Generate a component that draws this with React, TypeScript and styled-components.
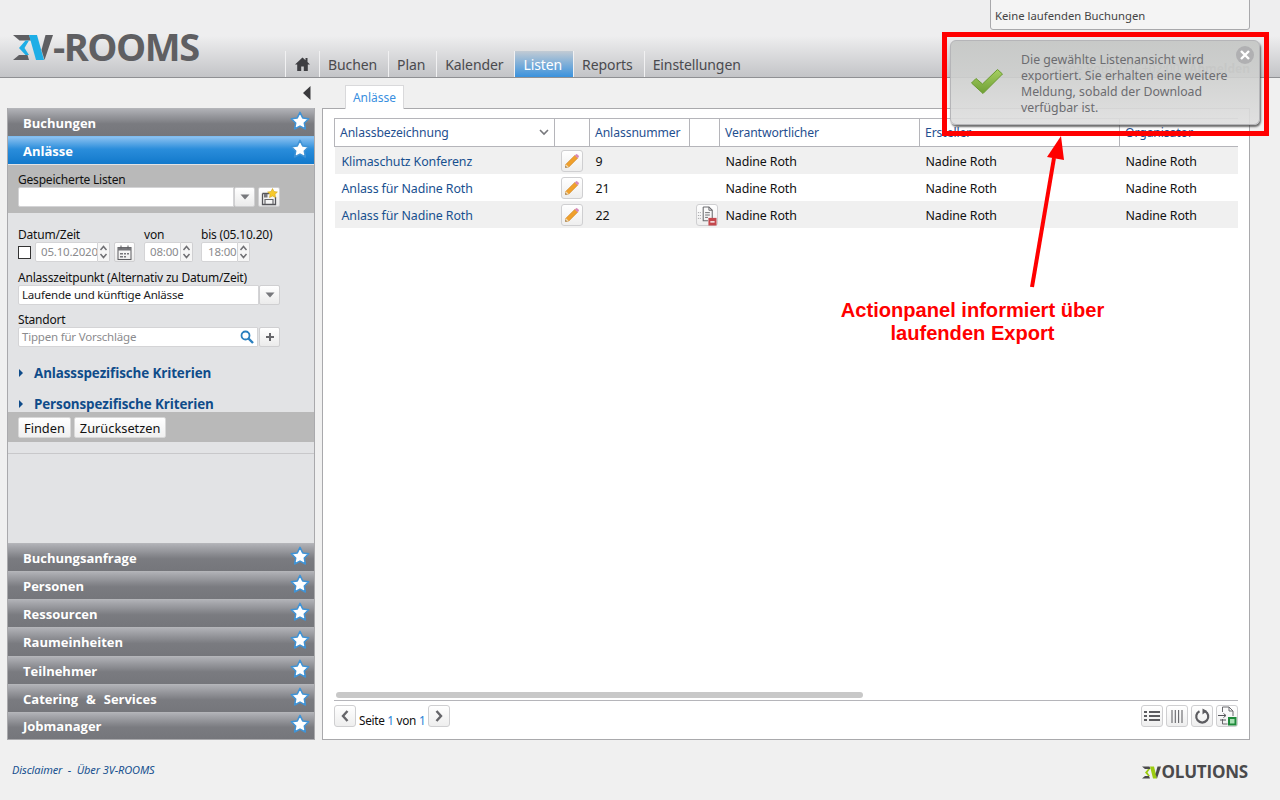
import React from 'react';
import styled, { createGlobalStyle } from 'styled-components';

const GlobalStyle = createGlobalStyle`
  html, body {
    margin: 0;
    padding: 0;
    background: #f0f0f0;
  }
  body {
    font-family: 'Noto Sans', 'Open Sans', sans-serif;
    font-size: 12px;
    color: #111;
  }
`;

const Page = styled.div`
  position: relative;
  width: 1280px;
  height: 800px;
  overflow: hidden;
  display: flex;
  flex-direction: column;
`;

/* header */

const Header = styled.header`
  height: 77px;
  flex: none;
  display: flex;
  align-items: flex-end;
  border-bottom: 1px solid #8f9093;
  background: linear-gradient(#eeeeef 0, #eeeeef 36px, #c3c4c7 77px);
`;

const Logo = styled.div`
  width: 272px;
  height: 44px;
  margin-left: 13px;
  display: flex;
  align-items: flex-start;
`;

const LogoText = styled.span`
  font-family: 'Open Sans', sans-serif;
  font-weight: 700;
  font-size: 38px;
  line-height: 27px;
  letter-spacing: -1.5px;
  color: #5f5f62;
  height: 27px;
`;

const Nav = styled.nav`
  display: flex;
  height: 26px;
`;

const NavItem = styled.div<{ $active?: boolean }>`
  height: 26px;
  box-sizing: border-box;
  padding: 0 11px 0 8px;
  display: flex;
  align-items: center;
  font-size: 14px;
  letter-spacing: -0.1px;
  border-left: 1px solid #f1f1f2;
  color: ${(p) => (p.$active ? '#ffffff' : '#4a4a4e')};
  background: ${(p) => (p.$active ? 'linear-gradient(#c2cbd4, #3a92dd)' : 'transparent')};
`;

const HomeItem = styled(NavItem)`
  width: 34px;
  justify-content: center;
  padding: 0;
`;

const UserBar = styled.div`
  position: absolute;
  top: 60px;
  right: 30px;
  font-size: 12px;
  color: #8c8c8e;
  display: flex;
  gap: 6px;
`;

const UserLogout = styled.b`
  color: #8c8c8e;
`;

const BookingBox = styled.div`
  position: absolute;
  top: -6px;
  left: 990px;
  width: 260px;
  height: 36px;
  box-sizing: border-box;
  padding: 13px 0 0 4px;
  background: #f4f4f4;
  border: 1px solid #a8a8ab;
  border-radius: 0 0 3px 3px;
  font-size: 11.3px;
  color: #444;
`;

/* layout */

const Body = styled.div`
  flex: 1;
  display: flex;
  align-items: flex-start;
  padding-left: 7px;
`;

const SideColumn = styled.div`
  width: 308px;
  display: flex;
  flex-direction: column;
`;

const CollapseRow = styled.div`
  height: 30px;
  display: flex;
  justify-content: flex-end;
  align-items: flex-start;
  padding: 8px 4px 0 0;
  box-sizing: border-box;
`;

const Sidebar = styled.aside`
  height: 632px;
  box-sizing: border-box;
  border: 1px solid #a9a9ac;
  border-top: none;
  display: flex;
  flex-direction: column;
  background: #e2e3e5;
`;

const AccordionHead = styled.div<{ $active?: boolean; $h?: number }>`
  height: ${(p) => p.$h ?? 28}px;
  flex: none;
  box-sizing: border-box;
  padding: 0 4px 0 15px;
  display: flex;
  align-items: center;
  justify-content: space-between;
  font-family: 'Open Sans', sans-serif;
  font-size: 13px;
  font-weight: 700;
  word-spacing: 4.5px;
  color: #fff;
  border-top: 1px solid ${(p) => (p.$active ? '#7fbdf0' : '#b4b5b9')};
  background: ${(p) =>
    p.$active
      ? 'linear-gradient(#8cc2f1, #2a8ddb 45%, #1279cb)'
      : 'linear-gradient(#b0b1b6, #7a7b80 55%, #75767b)'};
`;

const StarIcon = styled.svg`
  margin-bottom: 4px;
`;

const GrayBand = styled.div`
  height: 49px;
  flex: none;
  box-sizing: border-box;
  padding: 6px 10px 0;
  background: #b9b9b9;
  border-top: 1px solid #e2e3e5;
`;

const FormArea = styled.div`
  height: 199px;
  flex: none;
  box-sizing: border-box;
  padding: 13px 10px 0;
  display: flex;
  flex-direction: column;
`;

const FieldLabel = styled.div<{ $mt?: number }>`
  font-size: 12px;
  line-height: 18px;
  height: 16px;
  margin-top: ${(p) => p.$mt ?? 0}px;
  letter-spacing: -0.2px;
  white-space: nowrap;
`;

const FieldRow = styled.div`
  display: flex;
  align-items: center;
  height: 20px;
`;

const TextBox = styled.div<{ $w: number; $muted?: boolean; $ml?: number; $pl?: number }>`
  width: ${(p) => p.$w}px;
  height: 20px;
  flex: none;
  margin-left: ${(p) => p.$ml ?? 0}px;
  box-sizing: border-box;
  background: #fff;
  border: 1px solid #d4d4d6;
  border-radius: 2px 0 0 2px;
  padding: 0 1px 0 ${(p) => p.$pl ?? 3}px;
  font-size: 11.5px;
  line-height: 18px;
  letter-spacing: -0.2px;
  white-space: nowrap;
  overflow: hidden;
  color: ${(p) => (p.$muted ? '#8b8b8e' : '#222')};
  display: flex;
  align-items: center;
  justify-content: space-between;
`;

const SmallBtn = styled.div<{ $w: number; $ml?: number }>`
  width: ${(p) => p.$w}px;
  height: 20px;
  flex: none;
  margin-left: ${(p) => p.$ml ?? 0}px;
  box-sizing: border-box;
  border: 1px solid #cfcfd1;
  border-radius: 2px;
  background: linear-gradient(#ffffff, #ebebeb);
  display: flex;
  align-items: center;
  justify-content: center;
`;

const Spin = styled.div`
  width: 12px;
  height: 20px;
  flex: none;
  box-sizing: border-box;
  border: 1px solid #cfcfd1;
  border-left: none;
  border-radius: 0 2px 2px 0;
  background: #f6f6f6;
`;

const CheckBox = styled.div`
  width: 13px;
  height: 13px;
  flex: none;
  margin-right: 4px;
  box-sizing: border-box;
  background: #fff;
  border: 1px solid #333;
`;

const LabelRow = styled.div`
  display: flex;
  height: 16px;
`;

const LabelCell = styled(FieldLabel)<{ $w: number }>`
  width: ${(p) => p.$w}px;
`;

const Criteria = styled.div<{ $mt: number }>`
  margin-top: ${(p) => p.$mt}px;
  display: flex;
  align-items: center;
  height: 16px;
  font-family: 'Open Sans', sans-serif;
  font-weight: 700;
  font-size: 13.4px;
  letter-spacing: -0.1px;
  color: #0f4c8a;
  white-space: nowrap;
`;

const CriteriaArrow = styled.span`
  width: 0;
  height: 0;
  margin: 0 11px 0 1px;
  border-left: 4px solid #0f4c8a;
  border-top: 4px solid transparent;
  border-bottom: 4px solid transparent;
`;

const SearchIcon = styled.svg`
  margin-right: 1px;
`;

const ActionBand = styled.div`
  height: 30px;
  flex: none;
  box-sizing: border-box;
  padding: 5px 10px 0;
  display: flex;
  gap: 3px;
  background: #b9b9b9;
`;

const PlainBtn = styled.div`
  height: 21px;
  box-sizing: border-box;
  padding: 0 5px;
  display: flex;
  align-items: center;
  font-size: 12.8px;
  background: linear-gradient(#ffffff, #f0f0f0);
  border: 1px solid #d8d8d8;
  border-radius: 2px;
`;

const Spacer = styled.div`
  flex: 1;
  display: flex;
  flex-direction: column;
  padding-top: 11px;
  box-sizing: border-box;
`;

const SpacerLine = styled.div`
  height: 1px;
  background: #c8c8ca;
`;

/* main panel */

const MainColumn = styled.main`
  width: 928px;
  margin-left: 7px;
  display: flex;
  flex-direction: column;
`;

const TabRow = styled.div`
  height: 30px;
  box-sizing: border-box;
  padding: 6px 0 0 23px;
  display: flex;
  align-items: flex-end;
`;

const Tab = styled.div`
  height: 24px;
  width: 59px;
  margin-bottom: -1px;
  display: flex;
  align-items: center;
  justify-content: center;
  font-size: 12px;
  color: #3a8fe0;
  background: #fff;
  border: 1px solid #d9d9db;
  border-bottom: none;
  box-sizing: border-box;
  position: relative;
`;

const Panel = styled.section`
  height: 632px;
  box-sizing: border-box;
  padding: 9px 11px 0;
  background: #fff;
  border: 1px solid #a9a9ac;
  display: flex;
  flex-direction: column;
`;

const TableWrap = styled.div`
  flex: 1;
  overflow: hidden;
`;

const Table = styled.table`
  border-collapse: collapse;
  table-layout: fixed;
  width: 904px;
`;

const Th = styled.th<{ $w: number }>`
  width: ${(p) => p.$w}px;
  height: 28px;
  box-sizing: border-box;
  padding: 0 5px;
  text-align: left;
  font-weight: 400;
  font-size: 12.2px;
  letter-spacing: -0.1px;
  white-space: nowrap;
  color: #1f4f8f;
  border: 1px solid #b5b5ba;
`;

const ThInner = styled.div`
  display: flex;
  align-items: center;
  justify-content: space-between;
`;

const Tr = styled.tr<{ $odd: boolean }>`
  height: 27px;
  background: ${(p) => (p.$odd ? '#f0f0f0' : '#ffffff')};
`;

const Td = styled.td`
  padding: 2px 0 0 6px;
  font-size: 12.4px;
  letter-spacing: -0.1px;
  white-space: nowrap;
  color: #111;
`;

const LinkTd = styled(Td)`
  padding-left: 7px;
  color: #17508f;
`;

const RowIconBtn = styled.div`
  width: 22px;
  height: 22px;
  box-sizing: border-box;
  border: 1px solid #cfcfd1;
  border-radius: 3px;
  background: linear-gradient(#ffffff, #eeeeee);
  display: flex;
  align-items: center;
  justify-content: center;
`;

const ScrollTrack = styled.div`
  height: 8px;
  padding-left: 2px;
  flex: none;
`;

const ScrollThumb = styled.div`
  width: 527px;
  height: 6px;
  border-radius: 3px;
  background: #c8c8c8;
`;

const PagerBar = styled.div`
  height: 39px;
  flex: none;
  box-sizing: border-box;
  padding-top: 4px;
  border-top: 1px solid #b5b5ba;
  display: flex;
  justify-content: space-between;
  align-items: flex-start;
`;

const Pager = styled.div`
  display: flex;
  align-items: flex-start;
`;

const PagerText = styled.div`
  margin: 7px 3px 0 3px;
  font-size: 11.8px;
  letter-spacing: -0.3px;
`;

const PagerNum = styled.span`
  color: #2a82d6;
`;

const ToolBtns = styled.div`
  display: flex;
  gap: 3px;
`;

/* footer */

const Footer = styled.footer`
  flex: none;
  height: 60px;
  box-sizing: border-box;
  padding: 22px 32px 0 12px;
  display: flex;
  justify-content: space-between;
  align-items: flex-start;
`;

const FooterLinks = styled.div`
  font-size: 11px;
  font-style: italic;
  color: #17508f;
  letter-spacing: -0.1px;
  line-height: 16px;
`;

const Volutions = styled.div`
  display: flex;
  align-items: center;
  font-family: 'Open Sans', sans-serif;
  font-weight: 700;
  font-size: 17px;
  letter-spacing: -0.2px;
  color: #4a4a4c;
  line-height: 20px;
`;

/* overlays */

const Toast = styled.div`
  position: absolute;
  left: 950px;
  top: 40px;
  width: 310px;
  height: 85px;
  box-sizing: border-box;
  padding: 11px 20px 0 70px;
  border: 1px solid #b5b5b8;
  border-radius: 6px;
  background: linear-gradient(rgba(196, 198, 196, 0.9), rgba(222, 222, 222, 0.9));
  box-shadow: 1px 2px 2px rgba(60, 60, 60, 0.75);
  font-size: 12.3px;
  line-height: 16px;
  color: #6c6c70;
`;

const ToastCheck = styled.svg`
  position: absolute;
  left: 19px;
  top: 27px;
`;

const ToastClose = styled.div`
  position: absolute;
  right: 5px;
  top: 5px;
  width: 18px;
  height: 18px;
  border-radius: 50%;
  background: #b0b0b2;
  display: flex;
  align-items: center;
  justify-content: center;
`;

const RedFrame = styled.div`
  position: absolute;
  left: 942px;
  top: 32px;
  width: 327px;
  height: 104px;
  box-sizing: border-box;
  border: 5px solid #ff0000;
`;

const ArrowSvg = styled.svg`
  position: absolute;
  left: 1020px;
  top: 130px;
`;

const Annotation = styled.div`
  position: absolute;
  left: 800px;
  top: 299px;
  width: 345px;
  text-align: center;
  font-family: 'Liberation Sans', Arial, sans-serif;
  font-weight: 700;
  font-size: 20.1px;
  line-height: 23px;
  color: #ff0000;
`;

/* icons */

const Star = () => (
  <StarIcon width="20" height="20" viewBox="0 0 20 20">
    <path
      d="M10 1.4l2.7 5.5 6 .9-4.4 4.2 1.1 6-5.4-2.9-5.4 2.9 1.1-6L1.3 7.8l6-.9z"
      fill="#fff"
      stroke="#3f93d6"
      strokeWidth="1.5"
      strokeLinejoin="round"
    />
  </StarIcon>
);

const Caret = () => (
  <svg width="10" height="6" viewBox="0 0 10 6">
    <path d="M0.5 0.5h9L5 5.5z" fill="#77787c" />
  </svg>
);

const Spinner = () => (
  <Spin>
    <svg width="11" height="18" viewBox="0 0 11 18">
      <path d="M2.5 7L5.5 3.5 8.5 7M2.5 11L5.5 14.5 8.5 11" fill="none" stroke="#6f6f73" strokeWidth="1.5" />
    </svg>
  </Spin>
);

const Pencil = () => (
  <svg width="16" height="16" viewBox="0 0 16 16">
    <path d="M2 11.2L10.8 2.4l2.8 2.8L4.8 14 1.5 14.5z" fill="#f0a02c" stroke="#c97c14" strokeWidth="0.6" />
    <path d="M10.8 2.4l1-1a1.1 1.1 0 011.6 0l1.2 1.2a1.1 1.1 0 010 1.6l-1 1z" fill="#d88ab8" />
    <path d="M1.5 14.5l.5-3.3 2.8 2.8z" fill="#f4dcb0" />
    <path d="M1.5 14.5l.2-1.4 1.2 1.2z" fill="#444" />
  </svg>
);

const DocRemove = () => (
  <svg width="21" height="21" viewBox="0 0 21 21">
    <path d="M6.5 1.5h6l3.5 3.5v8M6.5 1.5V16h5" fill="none" stroke="#6a6a6e" strokeWidth="1.1" />
    <path d="M12.5 1.5V5H16M8.5 7.5h5M8.5 10h5M8.5 12.5h3" fill="none" stroke="#6a6a6e" />
    <path d="M1.5 7v1M1.5 10v1M1.5 13v1M3.5 7v1M3.5 10v1M3.5 13v1" stroke="#9a9a9e" />
    <rect x="12" y="13" width="8.5" height="8" fill="#c4474c" />
    <rect x="14" y="16.5" width="4.5" height="1.4" fill="#fff" />
  </svg>
);

const rows = [
  { name: 'Klimaschutz Konferenz', nr: '9', doc: false },
  { name: 'Anlass für Nadine Roth', nr: '21', doc: false },
  { name: 'Anlass für Nadine Roth', nr: '22', doc: true },
];

const lowerHeads = [
  { label: 'Buchungsanfrage', h: 28 },
  { label: 'Personen', h: 28 },
  { label: 'Ressourcen', h: 28 },
  { label: 'Raumeinheiten', h: 29 },
  { label: 'Teilnehmer', h: 28 },
  { label: 'Catering & Services', h: 28 },
  { label: 'Jobmanager', h: 27 },
];

const navItems = ['Buchen', 'Plan', 'Kalender', 'Listen', 'Reports', 'Einstellungen'];

const App = () => {
  return (
    <Page>
      <GlobalStyle />
      <Header>
        <Logo>
          <svg width="40" height="28" viewBox="0 0 40 28">
            <path d="M0 2h16l2 5.5H9.5L6.5 7.5z" fill="#5f5f62" />
            <path d="M0 27l6-5h8.5l1.5 5z" fill="#5f5f62" />
            <path d="M6 15l6.5-7.5H16l-4.5 7.5 4.5 7h-3.5z" fill="#1eaee6" />
            <path d="M16 2h8l7 25h-8z" fill="#1eaee6" />
            <path d="M32.5 2H40l-8.5 25-3-10z" fill="#5f5f62" />
          </svg>
          <LogoText>-ROOMS</LogoText>
        </Logo>
        <Nav>
          <HomeItem>
            <svg width="15" height="14" viewBox="0 0 15 14">
              <path d="M7.5 0.5L0 7.5h2.2V14h4v-4.5h2.6V14h4V7.5H15L12.5 5V1h-2v2.2z" fill="#3e3e42" />
            </svg>
          </HomeItem>
          {navItems.map((item) => (
            <NavItem key={item} $active={item === 'Listen'}>
              {item}
            </NavItem>
          ))}
        </Nav>
      </Header>

      <Body>
        <SideColumn>
          <CollapseRow>
            <svg width="8" height="14" viewBox="0 0 8 14">
              <path d="M7.5 0v14L0 7z" fill="#3a3a3d" />
            </svg>
          </CollapseRow>
          <Sidebar>
            <AccordionHead>
              Buchungen
              <Star />
            </AccordionHead>
            <AccordionHead $active>
              Anlässe
              <Star />
            </AccordionHead>
            <GrayBand>
              <FieldLabel>Gespeicherte Listen</FieldLabel>
              <FieldRow>
                <TextBox $w={216} />
                <SmallBtn $w={21}>
                  <Caret />
                </SmallBtn>
                <SmallBtn $w={22} $ml={3}>
                  <svg width="18" height="18" viewBox="0 0 18 18">
                    <path d="M2.5 5.5h7M2.5 5.5V16.5H15.5V9" fill="#f4f4f4" stroke="#55555a" strokeWidth="1.3" />
                    <path d="M5 16v-4.5h8V16" fill="none" stroke="#6a6a6e" strokeWidth="1.2" />
                    <rect x="4" y="6" width="3.5" height="3.5" fill="#77777b" />
                    <path d="M12.5 0.5l1.5 3 3.4.5-2.4 2.3.6 3.3-3.1-1.6-3 1.6.6-3.3L7.6 4l3.4-.5z" fill="#f6c92c" stroke="#c99a10" strokeWidth="0.5" />
                  </svg>
                </SmallBtn>
              </FieldRow>
            </GrayBand>
            <FormArea>
              <LabelRow>
                <LabelCell $w={126}>Datum/Zeit</LabelCell>
                <LabelCell $w={57}>von</LabelCell>
                <LabelCell $w={80}>bis (05.10.20)</LabelCell>
              </LabelRow>
              <FieldRow>
                <CheckBox />
                <TextBox $w={63} $muted $pl={5}>
                  05.10.2020
                </TextBox>
                <Spinner />
                <SmallBtn $w={21} $ml={4}>
                  <svg width="15" height="15" viewBox="0 0 15 15">
                    <rect x="1" y="2.5" width="13" height="12" fill="none" stroke="#5c5c60" />
                    <rect x="1" y="2.5" width="13" height="3" fill="#77777b" />
                    <path d="M3 8h3v1.5H3zM7 8h2v1.5H7zM10 8h2v1.5h-2zM3 11h3v1.5H3zM7 11h2v1.5H7z" fill="#77777b" />
                    <path d="M4 0.5v3M11 0.5v3" stroke="#5c5c60" />
                  </svg>
                </SmallBtn>
                <TextBox $w={37} $muted $ml={9} $pl={5}>
                  08:00
                </TextBox>
                <Spinner />
                <TextBox $w={37} $muted $ml={8} $pl={6}>
                  18:00
                </TextBox>
                <Spinner />
              </FieldRow>
              <FieldLabel $mt={7}>Anlasszeitpunkt (Alternativ zu Datum/Zeit)</FieldLabel>
              <FieldRow>
                <TextBox $w={241}>Laufende und künftige Anlässe</TextBox>
                <SmallBtn $w={21}>
                  <Caret />
                </SmallBtn>
              </FieldRow>
              <FieldLabel $mt={6}>Standort</FieldLabel>
              <FieldRow>
                <TextBox $w={240} $muted>
                  Tippen für Vorschläge
                  <SearchIcon width="16" height="16" viewBox="0 0 16 16">
                    <circle cx="6.5" cy="6.5" r="4" fill="none" stroke="#2a7fbe" strokeWidth="1.8" />
                    <path d="M9.5 9.5L14 14" stroke="#2a7fbe" strokeWidth="2.4" />
                  </SearchIcon>
                </TextBox>
                <SmallBtn $w={21} $ml={1}>
                  <svg width="10" height="10" viewBox="0 0 10 10">
                    <path d="M5 1v8M1 5h8" stroke="#66666a" strokeWidth="2" />
                  </svg>
                </SmallBtn>
              </FieldRow>
              <Criteria $mt={18}>
                <CriteriaArrow />
                Anlassspezifische Kriterien
              </Criteria>
              <Criteria $mt={15}>
                <CriteriaArrow />
                Personspezifische Kriterien
              </Criteria>
            </FormArea>
            <ActionBand>
              <PlainBtn>Finden</PlainBtn>
              <PlainBtn>Zurücksetzen</PlainBtn>
            </ActionBand>
            <Spacer>
              <SpacerLine />
            </Spacer>
            {lowerHeads.map((head) => (
              <AccordionHead key={head.label} $h={head.h}>
                {head.label}
                <Star />
              </AccordionHead>
            ))}
          </Sidebar>
        </SideColumn>

        <MainColumn>
          <TabRow>
            <Tab>Anlässe</Tab>
          </TabRow>
          <Panel>
            <TableWrap>
              <Table>
                <thead>
                  <tr>
                    <Th $w={220}>
                      <ThInner>
                        Anlassbezeichnung
                        <svg width="10" height="7" viewBox="0 0 10 7">
                          <path d="M1 1l4 4 4-4" fill="none" stroke="#77787c" strokeWidth="1.6" />
                        </svg>
                      </ThInner>
                    </Th>
                    <Th $w={35} />
                    <Th $w={100}>Anlassnummer</Th>
                    <Th $w={30} />
                    <Th $w={200}>Verantwortlicher</Th>
                    <Th $w={200}>Ersteller</Th>
                    <Th $w={119}>Organisator</Th>
                  </tr>
                </thead>
                <tbody>
                  {rows.map((row, i) => (
                    <Tr key={row.nr} $odd={i % 2 === 0}>
                      <LinkTd>{row.name}</LinkTd>
                      <Td>
                        <RowIconBtn>
                          <Pencil />
                        </RowIconBtn>
                      </Td>
                      <Td>{row.nr}</Td>
                      <Td>
                        {row.doc && (
                          <RowIconBtn>
                            <DocRemove />
                          </RowIconBtn>
                        )}
                      </Td>
                      <Td>Nadine Roth</Td>
                      <Td>Nadine Roth</Td>
                      <Td>Nadine Roth</Td>
                    </Tr>
                  ))}
                </tbody>
              </Table>
            </TableWrap>
            <ScrollTrack>
              <ScrollThumb />
            </ScrollTrack>
            <PagerBar>
              <Pager>
                <RowIconBtn>
                  <svg width="10" height="14" viewBox="0 0 10 14">
                    <path d="M7.5 2L3 7l4.5 5" fill="none" stroke="#66666a" strokeWidth="2.4" />
                  </svg>
                </RowIconBtn>
                <PagerText>
                  Seite <PagerNum>1</PagerNum> von <PagerNum>1</PagerNum>
                </PagerText>
                <RowIconBtn>
                  <svg width="10" height="14" viewBox="0 0 10 14">
                    <path d="M2.5 2L7 7l-4.5 5" fill="none" stroke="#66666a" strokeWidth="2.4" />
                  </svg>
                </RowIconBtn>
              </Pager>
              <ToolBtns>
                <RowIconBtn>
                  <svg width="16" height="12" viewBox="0 0 16 12">
                    <path d="M0 1h3v2H0zM0 5h3v2H0zM0 9h3v2H0zM5 1h11v2H5zM5 5h11v2H5zM5 9h11v2H5z" fill="#5c5c60" />
                  </svg>
                </RowIconBtn>
                <RowIconBtn>
                  <svg width="12" height="13" viewBox="0 0 12 13">
                    <path d="M1 0v13M4.3 0v13M7.6 0v13M11 0v13" stroke="#66666a" strokeWidth="1.1" />
                  </svg>
                </RowIconBtn>
                <RowIconBtn>
                  <svg width="16" height="16" viewBox="0 0 16 16">
                    <path d="M5.5 3.2a6 6 0 105.5 0" fill="none" stroke="#5c5c60" strokeWidth="2.2" />
                    <path d="M8.5 0.5v6l4.5-3.5z" fill="#5c5c60" />
                  </svg>
                </RowIconBtn>
                <RowIconBtn>
                  <svg width="20" height="20" viewBox="0 0 20 20">
                    <path d="M5.5 6V1h6.5l4 4v5M5.5 13v5h5M12 1v4h4" fill="none" stroke="#6a6a6e" />
                    <path d="M1 9.5h7.5M6.5 7.5l2.5 2-2.5 2M3 14h6" fill="none" stroke="#55555a" />
                    <rect x="11" y="11" width="8.5" height="8.5" fill="#1e8a3a" />
                    <rect x="13" y="13" width="4.5" height="4.5" fill="#a8e0b4" />
                  </svg>
                </RowIconBtn>
              </ToolBtns>
            </PagerBar>
          </Panel>
        </MainColumn>
      </Body>

      <Footer>
        <FooterLinks>Disclaimer &nbsp;-&nbsp; Über 3V-ROOMS</FooterLinks>
        <Volutions>
          <svg width="19" height="13" viewBox="0 0 19 13">
            <path d="M0 0.5h7.5L8.5 3H4.5L3 3zM0 12.5l3-2.5h4l1 2.5z" fill="#4a4a4c" />
            <path d="M3 6.5l3-3.5h2L5.5 6.5 8 10H6z" fill="#9ccc10" />
            <path d="M8 0.5h4l3 12h-4z" fill="#9ccc10" />
            <path d="M15.5 0.5H19l-4 12-1.5-4.5z" fill="#4a4a4c" />
          </svg>
          OLUTIONS
        </Volutions>
      </Footer>

      <BookingBox>Keine laufenden Buchungen</BookingBox>
      <UserBar>
        <span>Nadine Roth (UTC+02:00)</span>
        <UserLogout>Abmelden</UserLogout>
      </UserBar>

      <Toast>
        <ToastCheck width="34" height="27" viewBox="0 0 34 27">
          <defs>
            <linearGradient id="checkFill" x1="0" y1="0" x2="0" y2="1">
              <stop offset="0" stopColor="#a6cf62" />
              <stop offset="1" stopColor="#6f9f34" />
            </linearGradient>
          </defs>
          <path
            d="M1.5 15l4.5-4.5 6.5 5.5L27.5 1.5 32.5 6 13 25.5z"
            fill="url(#checkFill)"
            stroke="#6a9a30"
            strokeWidth="1"
            strokeLinejoin="round"
          />
        </ToastCheck>
        Die gewählte Listenansicht wird exportiert. Sie erhalten eine weitere Meldung, sobald der Download verfügbar ist.
        <ToastClose>
          <svg width="10" height="10" viewBox="0 0 10 10">
            <path d="M1 1l8 8M9 1L1 9" stroke="#fff" strokeWidth="2.4" />
          </svg>
        </ToastClose>
      </Toast>
      <RedFrame />
      <ArrowSvg width="50" height="160" viewBox="0 0 50 160">
        <path d="M12 157L34 28" stroke="#ff0000" strokeWidth="4" />
        <path d="M41 6L27 27l17 3z" fill="#ff0000" />
      </ArrowSvg>
      <Annotation>
        Actionpanel informiert über
        <br />
        laufenden Export
      </Annotation>
    </Page>
  );
};

export default App;
